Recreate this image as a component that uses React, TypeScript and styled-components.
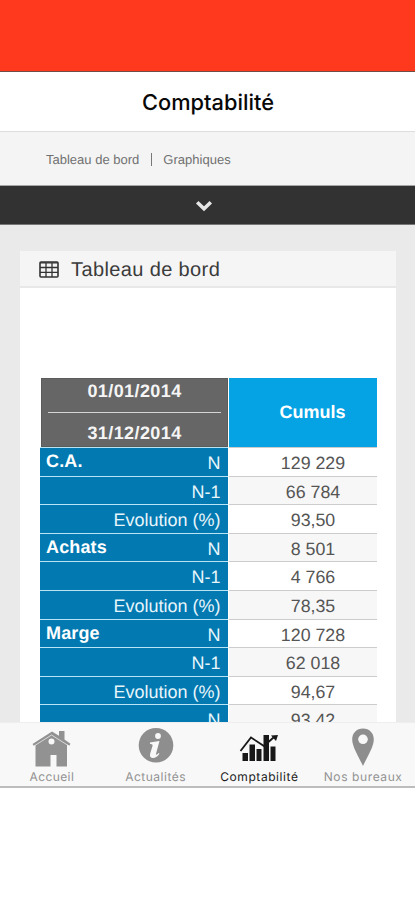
import React from 'react';
import styled, { createGlobalStyle } from 'styled-components';

const GlobalStyle = createGlobalStyle`
  * { box-sizing: border-box; }
  body { margin: 0; background: #fff; text-rendering: geometricPrecision; }
`;

const Screen = styled.div`
  width: 415px;
  height: 900px;
  display: flex;
  flex-direction: column;
  overflow: hidden;
  background: #fff;
  font-family: 'Liberation Sans', Arial, sans-serif;
`;

const StatusBar = styled.div`
  flex: none;
  height: 72px;
  background: #ff391d;
  border-bottom: 1px solid #704c46;
`;

const TitleBar = styled.header`
  flex: none;
  height: 60px;
  display: flex;
  align-items: center;
  justify-content: center;
  padding: 2px 0 0 1px;
  border-bottom: 1px solid #dedede;
`;

const Title = styled.h1`
  margin: 0;
  font: 500 21.8px/28px Inter, sans-serif;
  letter-spacing: 0.02px;
  color: #080808;
`;

const Links = styled.nav`
  flex: none;
  height: 54px;
  display: flex;
  align-items: center;
  padding: 1px 0 0 46px;
  background: #f4f4f4;
  border-bottom: 1px solid #a5a5a5;
  font-size: 13px;
  color: #707070;
`;

const LinkItem = styled.span<{ $spacing: number }>`
  letter-spacing: ${(p) => p.$spacing}px;
`;

const Divider = styled.span`
  width: 1px;
  height: 13px;
  margin: 0 11px 0 12px;
  background: #777;
`;

const Drawer = styled.div`
  flex: none;
  height: 39px;
  display: flex;
  align-items: center;
  justify-content: center;
  padding: 2px 7px 0 0;
  background: #323232;
  border-bottom: 1px solid #777;
`;

const Content = styled.main`
  flex: none;
  height: 497px;
  padding: 26px 19px 0 20px;
  background: #eaeaea;
  overflow: hidden;
`;

const Card = styled.section`
  height: 500px;
  background: #fff;
  border-radius: 2px 2px 0 0;
`;

const CardHeader = styled.div`
  height: 37px;
  display: flex;
  align-items: center;
  gap: 12px;
  padding: 1px 0 0 19px;
  background: #f5f5f5;
  border-bottom: 2px solid #e8e8e8;
`;

const CardTitle = styled.h2`
  margin: 0;
  padding-top: 2px;
  font-size: 20px;
  line-height: 24px;
  font-weight: 400;
  letter-spacing: 0.38px;
  color: #3b3b3b;
`;

const Table = styled.div`
  margin: 90px 19px 0 19.5px;
`;

const TableHead = styled.div`
  display: flex;
  gap: 1px;
  height: 69px;
  padding-left: 1.5px;
`;

const Period = styled.div`
  width: 187px;
  display: flex;
  flex-direction: column;
  align-items: center;
  padding: 0 6px;
  background: #666;
  border: 1px solid #5b5b5b;
  color: #f5f5f5;
  font-weight: 700;
  font-size: 18px;
  letter-spacing: 0.4px;
`;

const PeriodDate = styled.span<{ $last?: boolean }>`
  line-height: 20px;
  padding-top: ${(p) => (p.$last ? 10 : 2)}px;
`;

const PeriodRule = styled.span`
  align-self: stretch;
  height: 1px;
  margin-top: 11px;
  background: #d5d5d5;
`;

const TotalHead = styled.div`
  flex: 1;
  display: flex;
  align-items: center;
  justify-content: center;
  padding-left: 19px;
  background: #05a3e3;
  color: #fff;
  font-weight: 700;
  font-size: 18px;
  letter-spacing: 0;
`;

const Row = styled.div`
  display: flex;
  gap: 1px;
  height: 28.6px;
`;

const Label = styled.div`
  width: 188.5px;
  display: flex;
  justify-content: space-between;
  padding: 0 7.5px 0 6.5px;
  line-height: 31px;
  background: #0279b1;
  border-top: 1.5px solid #b9e4f5;
  color: #e8f5fb;
  font-size: 18px;
`;

const Group = styled.strong`
  color: #fff;
  line-height: 27px;
  letter-spacing: 0.15px;
`;

const Measure = styled.span`
  margin-left: auto;
  letter-spacing: 0;
`;

const Value = styled.div<{ $shade: boolean }>`
  flex: 1;
  padding-left: 20px;
  line-height: 31px;
  text-align: center;
  background: ${(p) => (p.$shade ? '#f7f7f7' : '#fff')};
  border-top: 1px solid #ccc;
  color: #555;
  font-size: 17.8px;
`;

const TabBar = styled.nav`
  flex: none;
  height: 66px;
  display: grid;
  grid-template-columns: repeat(4, 1fr);
  background: #f8f8f8;
  border-top: 1px solid #eee;
  border-bottom: 2px solid #bdbdbd;
`;

const Tab = styled.div<{ $active: boolean; $spacing: number }>`
  display: flex;
  flex-direction: column;
  align-items: center;
  padding-top: 5px;
  font: 400 12px/16px Inter, sans-serif;
  letter-spacing: ${(p) => p.$spacing}px;
  color: ${(p) => (p.$active ? '#1b1b1b' : '#929292')};

  svg { display: block; flex: none; margin-bottom: 2px; }
`;

const ChevronIcon = () => (
  <svg width="18" height="14" viewBox="0 0 18 14">
    <path d="M2.200 3.200 9 9.800l6.800-6.600" fill="none" stroke="#e6e6e6" strokeWidth="3.500" />
  </svg>
);

const GridIcon = () => (
  <svg width="20" height="17" viewBox="0 0 20 17">
    <rect x="1" y="1" width="18" height="15" rx="1" fill="none" stroke="#333" strokeWidth="1.600" />
    <path d="M1 1.800h18M1 6.500h18M1 11.300h18M7 2v14M13 2v14" stroke="#333" strokeWidth="1.300" />
  </svg>
);

const HomeIcon = () => (
  <svg width="40" height="39" viewBox="0 0 40 39">
    <path d="M.5 16 20 3.500l7 4.200V3h5.500v8.500l6 4.300-1.300 2-2.200-1.200V38.500H24.500V27h-6v11.500H3.500V17l-1.500 1Z" fill="#929292" />
    <path d="m2 18 17.500-11L37 18" fill="none" stroke="#f8f8f8" strokeWidth=".7" />
    <circle cx="19.500" cy="13.500" r="3" fill="#f8f8f8" />
  </svg>
);

const InfoIcon = () => (
  <svg width="40" height="39" viewBox="0 0 40 39">
    <circle cx="20" cy="17.300" r="17.300" fill="#8e8e8e" />
    <circle cx="22" cy="8" r="2.900" fill="#f8f8f8" />
    <path d="M14 14.500c3-.4 6-1 9.500-1.500l-3.400 12.500c-.5 1.900.8 1.500 2.500-.5l.9.800c-2.400 3.600-4.900 4.300-7 4.100-2.500-.3-2.900-2-2.300-4.400l2.300-7.500c.4-1.500-.5-2.300-2.500-2Z" fill="#f8f8f8" />
  </svg>
);

const ChartIcon = () => (
  <svg width="40" height="39" viewBox="0 0 40 39">
    <path d="M3.500 25h5.500v8H3.500zM10.500 16.500H16V33h-5.500zM17.500 21h5v12h-5zM24.500 7H30v26h-5.500zM31.500 18.500h5V33h-5z" fill="#181818" />
    <path d="m1.500 23 10.500-13.500L25 18l9.500-8.500" fill="none" stroke="#181818" strokeWidth="1.800" />
    <path d="m32 7.600 7-.6-2 6Z" fill="#181818" />
  </svg>
);

const PinIcon = () => (
  <svg width="40" height="39" viewBox="0 0 40 39">
    <path d="M20 .5C13.500.5 9.200 5.200 9.200 11.500c0 7.500 7 18 10.800 26.500 3.800-8.500 10.800-19 10.800-26.500C30.800 5.200 26.500.5 20 .5Z" fill="#8e8e8e" />
    <circle cx="20" cy="11.300" r="4.800" fill="#f8f8f8" />
  </svg>
);

const rows: { group?: string; measure: string; value: string }[] = [
  { group: 'C.A.', measure: 'N', value: '129 229' },
  { measure: 'N-1', value: '66 784' },
  { measure: 'Evolution (%)', value: '93,50' },
  { group: 'Achats', measure: 'N', value: '8 501' },
  { measure: 'N-1', value: '4 766' },
  { measure: 'Evolution (%)', value: '78,35' },
  { group: 'Marge', measure: 'N', value: '120 728' },
  { measure: 'N-1', value: '62 018' },
  { measure: 'Evolution (%)', value: '94,67' },
  { measure: 'N', value: '93,42' },
];

const tabs = [
  { label: 'Accueil', icon: <HomeIcon />, spacing: 0.4 },
  { label: 'Actualités', icon: <InfoIcon />, spacing: 0.5 },
  { label: 'Comptabilité', icon: <ChartIcon />, spacing: 0.57, active: true },
  { label: 'Nos bureaux', icon: <PinIcon />, spacing: 0.6 },
];

export default function App() {
  return (
    <>
      <GlobalStyle />
      <Screen>
        <StatusBar />
        <TitleBar>
          <Title>Comptabilité</Title>
        </TitleBar>
        <Links>
          <LinkItem $spacing={0}>Tableau de bord</LinkItem>
          <Divider />
          <LinkItem $spacing={0.02}>Graphiques</LinkItem>
        </Links>
        <Drawer>
          <ChevronIcon />
        </Drawer>
        <Content>
          <Card>
            <CardHeader>
              <GridIcon />
              <CardTitle>Tableau de bord</CardTitle>
            </CardHeader>
            <Table>
              <TableHead>
                <Period>
                  <PeriodDate>01/01/2014</PeriodDate>
                  <PeriodRule />
                  <PeriodDate $last>31/12/2014</PeriodDate>
                </Period>
                <TotalHead>Cumuls</TotalHead>
              </TableHead>
              {rows.map((row, i) => (
                <Row key={i}>
                  <Label>
                    {row.group && <Group>{row.group}</Group>}
                    <Measure>{row.measure}</Measure>
                  </Label>
                  <Value $shade={i % 2 === 1}>{row.value}</Value>
                </Row>
              ))}
            </Table>
          </Card>
        </Content>
        <TabBar>
          {tabs.map((tab) => (
            <Tab key={tab.label} $active={!!tab.active} $spacing={tab.spacing}>
              {tab.icon}
              {tab.label}
            </Tab>
          ))}
        </TabBar>
      </Screen>
    </>
  );
}
